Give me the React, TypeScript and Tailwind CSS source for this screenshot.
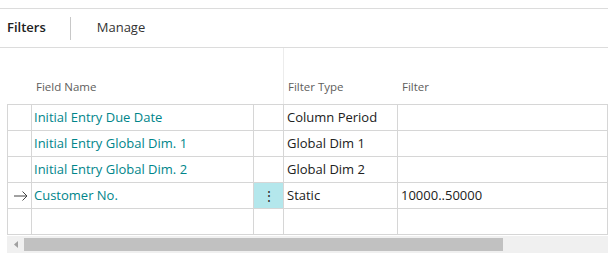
import React from "react";

const rows = [
  { name: "Initial Entry Due Date", type: "Column Period", filter: "", current: false },
  { name: "Initial Entry Global Dim. 1", type: "Global Dim 1", filter: "", current: false },
  { name: "Initial Entry Global Dim. 2", type: "Global Dim 2", filter: "", current: false },
  { name: "Customer No.", type: "Static", filter: "10000..50000", current: true },
  { name: "", type: "", filter: "", current: false },
];

export default function App() {
  return (
    <div
      className="w-[608px] h-[256px] bg-white overflow-hidden text-[#212121]"
      style={{ fontFamily: '"Open Sans", "Noto Sans", sans-serif' }}
    >
      <div className="h-[8px]" />
      <div className="h-[40px] border-t border-b border-[#dcdcdc] flex items-center">
        <span className="pl-[7px] text-[13px] font-semibold text-[#212121]">Filters</span>
        <span className="ml-[24px] w-px h-[23px] bg-[#c8c8c8]" />
        <span className="ml-[26px] text-[13px] text-[#333]">Manage</span>
      </div>
      <div className="h-[56px] flex">
        <div className="w-[283px] flex items-end pb-[9px] pl-[36px] text-[11.5px] text-[#605e5c]">Field Name</div>
        <div className="w-px bg-[#ececec]" />
        <div className="w-[113px] flex items-end pb-[9px] pl-[4px] text-[11.5px] text-[#605e5c]">Filter Type</div>
        <div className="flex-1 flex items-end pb-[9px] pl-[5px] text-[11.5px] text-[#605e5c]">Filter</div>
      </div>
      <div className="ml-[7px] border-l border-t border-[#d6d6d6] w-[601px]">
        {rows.map((r, i) => (
          <div key={i} className="flex h-[26px]">
            <div className="w-[24px] border-r border-b border-[#d6d6d6] flex items-center justify-center">
              {r.current ? (
                <svg width="14" height="10" viewBox="0 0 14 10" className="ml-[2px]">
                  <path d="M0 5 H13 M8.5 0.5 L13 5 L8.5 9.5" stroke="#444" strokeWidth="1" fill="none" />
                </svg>
              ) : null}
            </div>
            <div className="w-[222px] border-r border-b border-[#d6d6d6] flex items-center pl-[2px] text-[13px] text-[#00858a] whitespace-nowrap">
              {r.name}
            </div>
            <div
              className={`w-[30px] border-r border-b border-[#d6d6d6] flex items-center justify-center text-[14px] text-[#333] ${
                r.current ? "bg-[#b4e7ec]" : ""
              }`}
            >
              {r.current ? "⋮" : ""}
            </div>
            <div className="w-[114px] border-r border-b border-[#d6d6d6] flex items-center pl-[3px] text-[13px] whitespace-nowrap">
              {r.type}
            </div>
            <div className="w-[210px] border-r border-b border-[#d6d6d6] flex items-center pl-[3px] text-[13px] whitespace-nowrap">
              {r.filter}
            </div>
          </div>
        ))}
      </div>
      <div className="ml-[7px] mt-[1px] h-[17px] bg-[#f0f0f0] flex items-center">
        <div className="w-[17px] flex items-center justify-center">
          <svg width="4" height="7" viewBox="0 0 4 7">
            <path d="M4 0 L0 3.5 L4 7 Z" fill="#a0a0a0" />
          </svg>
        </div>
        <div className="w-[479px] h-[13px] bg-[#c1c1c1]" />
      </div>
    </div>
  );
}
